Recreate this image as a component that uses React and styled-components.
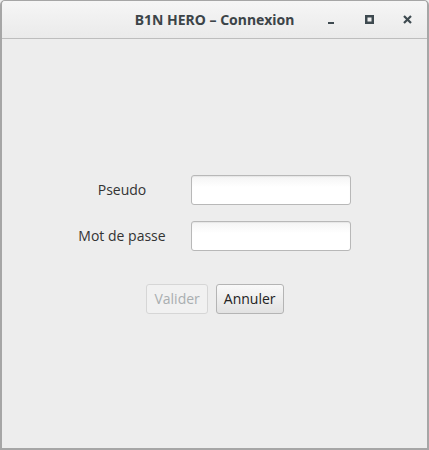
import React from "react";
import styled, { createGlobalStyle } from "styled-components";

const Global = createGlobalStyle`
  html, body { margin: 0; padding: 0; background: #ededed; }
  body { font-family: "Open Sans", "Noto Sans", sans-serif; }
  * { box-sizing: border-box; }
`;

const Window = styled.div`
  width: 429px;
  height: 450px;
  display: flex;
  flex-direction: column;
  border: 2px solid #a6a6a6;
  border-top-width: 1px;
  border-radius: 5px 5px 0 0;
  background: #ededed;
  overflow: hidden;
`;

const TitleBar = styled.div`
  height: 38px;
  flex: none;
  position: relative;
  display: flex;
  align-items: center;
  justify-content: center;
  background: linear-gradient(#f6f6f6, #eaeaea);
  border-bottom: 1px solid #bdbdbd;
`;

const Title = styled.div`
  font-family: "Noto Sans", "Open Sans", sans-serif;
  font-weight: bold;
  font-size: 14px;
  color: #3c4448;
`;

const Controls = styled.div`
  position: absolute;
  right: 0;
  top: 0;
  height: 100%;
  display: flex;
  align-items: center;
`;

const CtrlBtn = styled.div`
  width: 38px;
  height: 38px;
  display: flex;
  align-items: center;
  justify-content: center;
`;

const Content = styled.div`
  flex: 1;
  display: flex;
  flex-direction: column;
  align-items: center;
  justify-content: center;
  padding-top: 1px;
`;

const Form = styled.div`
  display: grid;
  grid-template-columns: auto 160px;
  column-gap: 25px;
  row-gap: 16px;
  align-items: center;
`;

const Label = styled.div`
  font-size: 14px;
  color: #333;
  text-align: center;
`;

const Field = styled.input`
  width: 160px;
  height: 30px;
  border: 1px solid #b8b8b8;
  border-radius: 3px;
  background: linear-gradient(#f4f4f4, #ffffff 40%);
  box-shadow: inset 0 1px 1px rgba(0,0,0,0.06);
  outline: none;
  font-family: inherit;
  font-size: 14px;
  padding: 0 6px;
`;

const Buttons = styled.div`
  display: flex;
  gap: 8px;
  margin-top: 33px;
  margin-left: 1px;
`;

const Button = styled.button`
  height: 30px;
  padding: 0 7px;
  border: 1px solid ${p => (p.disabled ? "#d6d6d6" : "#b4b4b4")};
  border-radius: 3px;
  background: ${p => (p.disabled ? "#f1f1f1" : "linear-gradient(#f9f9f9, #e2e2e2)")};
  color: ${p => (p.disabled ? "#a9aeb0" : "#222")};
  font-family: "Open Sans", "Noto Sans", sans-serif;
  font-size: 14px;
`;

export default function App() {
  return (
    <>
      <Global />
      <Window>
        <TitleBar>
          <Title>B1N HERO – Connexion</Title>
          <Controls>
            <CtrlBtn>
              <svg width="10" height="10" viewBox="0 0 10 10">
                <rect x="1" y="7" width="6" height="2" fill="#3e4a50" />
              </svg>
            </CtrlBtn>
            <CtrlBtn>
              <svg width="10" height="10" viewBox="0 0 10 10">
                <rect x="1.25" y="1.25" width="6.5" height="6.5" fill="none" stroke="#3e4a50" strokeWidth="2.5" />
              </svg>
            </CtrlBtn>
            <CtrlBtn>
              <svg width="10" height="10" viewBox="0 0 10 10">
                <path d="M1 1L8 8M8 1L1 8" stroke="#3e4a50" strokeWidth="2.2" />
              </svg>
            </CtrlBtn>
          </Controls>
        </TitleBar>
        <Content>
          <Form>
            <Label>Pseudo</Label>
            <Field />
            <Label>Mot de passe</Label>
            <Field type="password" />
          </Form>
          <Buttons>
            <Button disabled>Valider</Button>
            <Button>Annuler</Button>
          </Buttons>
        </Content>
      </Window>
    </>
  );
}
